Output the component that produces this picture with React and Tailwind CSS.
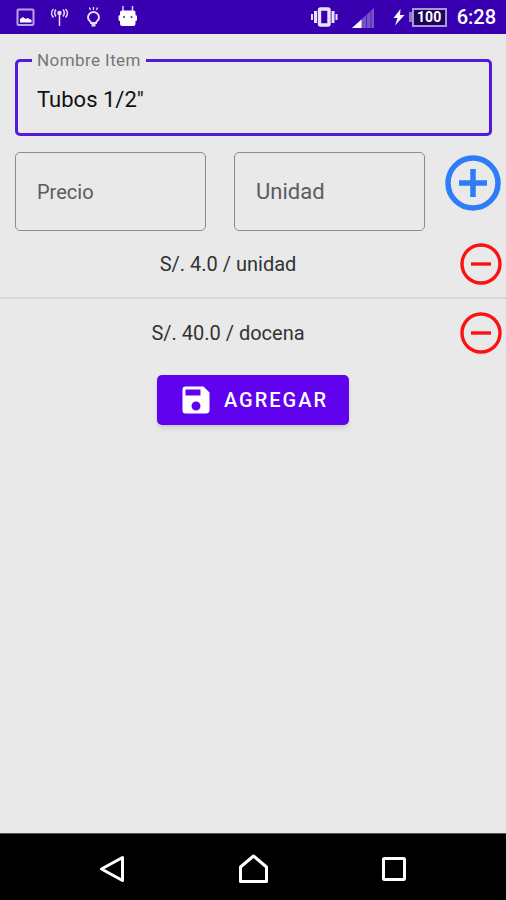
// src/App.jsx
import React, { useState } from 'react';
import { MdSave } from 'react-icons/md';

const PRECIOS = [
  { id: 1, precio: '4.0', unidad: 'unidad' },
  { id: 2, precio: '40.0', unidad: 'docena' }
];

const StatusBar = () => (
  <header className="flex h-[34px] items-center bg-[#3900b1] pr-2.5 pl-4 text-white">
    <div className="flex flex-1 items-center gap-3.5 text-[#e4dbf8]">
      <svg width="20" height="20" viewBox="0 0 20 20" fill="none">
        <rect x="1.5" y="2.5" width="16" height="15.5" rx="1" stroke="#b9a5e6" strokeWidth="2" />
        <path d="M4 15.5v-3.5l3-2 2.5 2 2-1 4 2v2.5z" fill="#fff" />
      </svg>
      <svg width="20" height="20" viewBox="0 0 20 20" fill="none" stroke="currentColor" strokeWidth="1.5">
        <path d="M9.5 6v13" />
        <circle cx="9.5" cy="6" r="1.5" fill="currentColor" />
        <path d="M6 2.5c-1.5 2-1.5 5 0 7M13 2.5c1.500 2 1.500 5 0 7" />
        <path d="M3.500 2c-2.500 2.500-2.500 6 0 8.500M15.500 2c2.500 2.500 2.500 6 0 8.500" />
      </svg>
      <svg width="20" height="22" viewBox="0 0 20 22" fill="none" stroke="currentColor" strokeWidth="2">
        <path d="M7 17c0-2-3-2.500-3-5.500a5.500 5.500 0 0 1 11 0c0 3-3 3.500-3 5.500z" />
        <path d="M7.500 17.500h4v3h-4z" fill="currentColor" stroke="none" />
        <path d="M9.500 1v3M5.500 1.500l1 2.500M13.500 1.500l-1 2.500" strokeWidth="1.3" />
      </svg>
      <svg width="20" height="22" viewBox="0 0 20 22" fill="none">
        <path d="M5 0v6M14.500 0v6" stroke="#d9cdf5" strokeWidth="1.5" />
        <path d="M4 4.500h11.500q2 0 2 2V9q1.500 0 1.500 1.500v3q0 1.500-1.500 1.500v2.500q0 2.500-2.500 2.500H4.500Q2 20 2 17.500V15Q0.500 15 0.500 13.500v-3Q0.500 9 2 9V6.500q0-2 2-2z" fill="#fff" />
        <circle cx="6" cy="11" r="1.1" fill="#5b3abb" />
        <circle cx="13.500" cy="11" r="1.1" fill="#5b3abb" />
      </svg>
    </div>

    <svg className="mr-3.5" width="28" height="22" viewBox="0 0 28 22" fill="none" stroke="#e9e2fa">
      <rect x="9.500" y="3" width="9.500" height="16" rx="1" strokeWidth="3.4" />
      <path d="M5.500 5v12M23 5v12" strokeWidth="3" />
      <path d="M2 8v6M26.500 8v6" strokeWidth="2" />
    </svg>
    <svg className="mr-[19px]" width="22" height="22" viewBox="0 0 22 22">
      <path d="M0 22L22 2v20z" fill="#7654c8" />
      <path d="M14.500 8.400v13.600M19 5v17" stroke="#4f22b8" strokeWidth="1" />
      <path d="M0 22L9.500 13.400V22z" fill="#fff" />
    </svg>
    <svg className="mr-1" width="12" height="20" viewBox="0 0 12 20">
      <path d="M7.500 2L0.500 11h4l-2.500 7.500L11.500 8H7z" fill="#fff" />
    </svg>
    <div className="mr-2.5 flex items-center">
      <span className="h-2.5 w-[3px] bg-[#8e7bc0]" />
      <span className="flex h-[19px] w-[35px] items-center justify-center border-2 border-[#a898d4] bg-[#1b0459] text-[14px] font-bold">
        100
      </span>
    </div>
    <span className="text-[20px] leading-6 font-medium">6:28</span>
  </header>
);

// La etiqueta ocupa el mismo espacio que el campo y se oculta al escribir
const CampoVacio = ({ id, etiqueta, value, onChange, textSize }) => (
  <div className="grid min-w-0 flex-1 items-center rounded-[5px] border border-[#8c8c8c] text-[#111]">
    {!value && (
      <label htmlFor={id} className={`col-start-1 row-start-1 px-[21px] text-[#5c5c5c] ${textSize}`}>
        {etiqueta}
      </label>
    )}
    <input
      type="text"
      id={id}
      value={value}
      onChange={onChange}
      className={`col-start-1 row-start-1 h-[77px] w-full min-w-0 px-[21px] outline-none ${textSize}`}
    />
  </div>
);

const BotonQuitar = ({ etiqueta, onClick }) => (
  <button type="button" aria-label={etiqueta} onClick={onClick} className="mr-1 ml-1 text-[#fb1313]">
    <svg width="42" height="42" viewBox="0 0 42 42" fill="none" stroke="currentColor" strokeWidth="3.4">
      <circle cx="21" cy="21" r="19" />
      <path d="M11 21h20" />
    </svg>
  </button>
);

const NavBar = () => (
  <nav className="flex h-[67px] items-center justify-center gap-[101px] border-t border-[#555] bg-black pt-1 text-white">
    <button type="button" aria-label="Atrás" className="w-10">
      <svg className="mx-auto" width="30" height="30" viewBox="0 0 30 30" fill="none" stroke="currentColor" strokeWidth="3">
        <path d="M25.500 3.500v23L4.500 15z" strokeLinejoin="round" />
      </svg>
    </button>
    <button type="button" aria-label="Inicio" className="w-10">
      <svg className="mx-auto" width="30" height="30" viewBox="0 0 30 30" fill="none" stroke="currentColor" strokeWidth="3">
        <path d="M15.500 2L28.500 13v14.500h-26V13z" strokeLinejoin="round" />
      </svg>
    </button>
    <button type="button" aria-label="Recientes" className="w-10">
      <svg className="mx-auto" width="30" height="30" viewBox="0 0 30 30" fill="none" stroke="currentColor" strokeWidth="3">
        <rect x="4.500" y="4.500" width="21" height="21" rx="1" />
      </svg>
    </button>
  </nav>
);

const App = () => {
  const [nombre, setNombre] = useState('Tubos 1/2"');
  const [precio, setPrecio] = useState('');
  const [unidad, setUnidad] = useState('');
  const [precios, setPrecios] = useState(PRECIOS);

  const agregarPrecio = () => {
    if (!precio || !unidad) return;
    setPrecios([...precios, { id: Date.now(), precio, unidad }]);
    setPrecio('');
    setUnidad('');
  };

  const quitarPrecio = (id) => {
    setPrecios(precios.filter(p => p.id !== id));
  };

  return (
    <div className="flex min-h-screen flex-col bg-[#e9e9e9] font-['Roboto',sans-serif]">
      <StatusBar />

      <form className="flex-1 pt-[15px]" onSubmit={(e) => e.preventDefault()}>
        <fieldset className="mr-3.5 ml-[15px] rounded-[5px] border-3 border-[#5518dd] pl-3.5">
          <legend className="px-[5px] text-[17px] leading-[22px] tracking-wide text-[#777]">
            <label htmlFor="nombre">Nombre Item</label>
          </legend>
          <input
            type="text"
            id="nombre"
            value={nombre}
            onChange={(e) => setNombre(e.target.value)}
            className="mb-1.5 block h-14 w-full px-[5px] text-[22px] text-[#111] outline-none"
          />
        </fieldset>

        <div className="mt-4 mr-[5px] ml-[15px] flex items-start">
          <CampoVacio
            id="precio"
            etiqueta="Precio"
            value={precio}
            onChange={(e) => setPrecio(e.target.value)}
            textSize="text-[20px]"
          />
          <div className="w-7" />
          <CampoVacio
            id="unidad"
            etiqueta="Unidad"
            value={unidad}
            onChange={(e) => setUnidad(e.target.value)}
            textSize="text-[22px]"
          />
          <button type="button" aria-label="Agregar precio" onClick={agregarPrecio} className="mt-[3px] ml-5 text-[#2e7df6]">
            <svg width="56" height="56" viewBox="0 0 56 56" fill="none" stroke="currentColor" strokeWidth="5.5">
              <circle cx="28" cy="28" r="25" />
              <path d="M14 28h28M28 14v28" />
            </svg>
          </button>
        </div>

        <ul className="divide-y-2 divide-[#d8d8d8]">
          {precios.map(p => (
            <li key={p.id} className="flex h-[68px] items-center">
              <span className="flex-1 text-center text-[20px] leading-6 text-[#333]">
                S/. {p.precio} / {p.unidad}
              </span>
              <BotonQuitar etiqueta={`Quitar ${p.unidad}`} onClick={() => quitarPrecio(p.id)} />
            </li>
          ))}
        </ul>

        <button
          type="submit"
          className="mx-auto mt-2 flex h-[50px] items-center rounded-[5px] bg-[#6002ee] px-[21px] text-[20px] font-medium tracking-widest text-white shadow-md"
        >
          <MdSave size={36} className="mr-2.5" />
          AGREGAR
        </button>
      </form>

      <NavBar />
    </div>
  );
};

export default App;
